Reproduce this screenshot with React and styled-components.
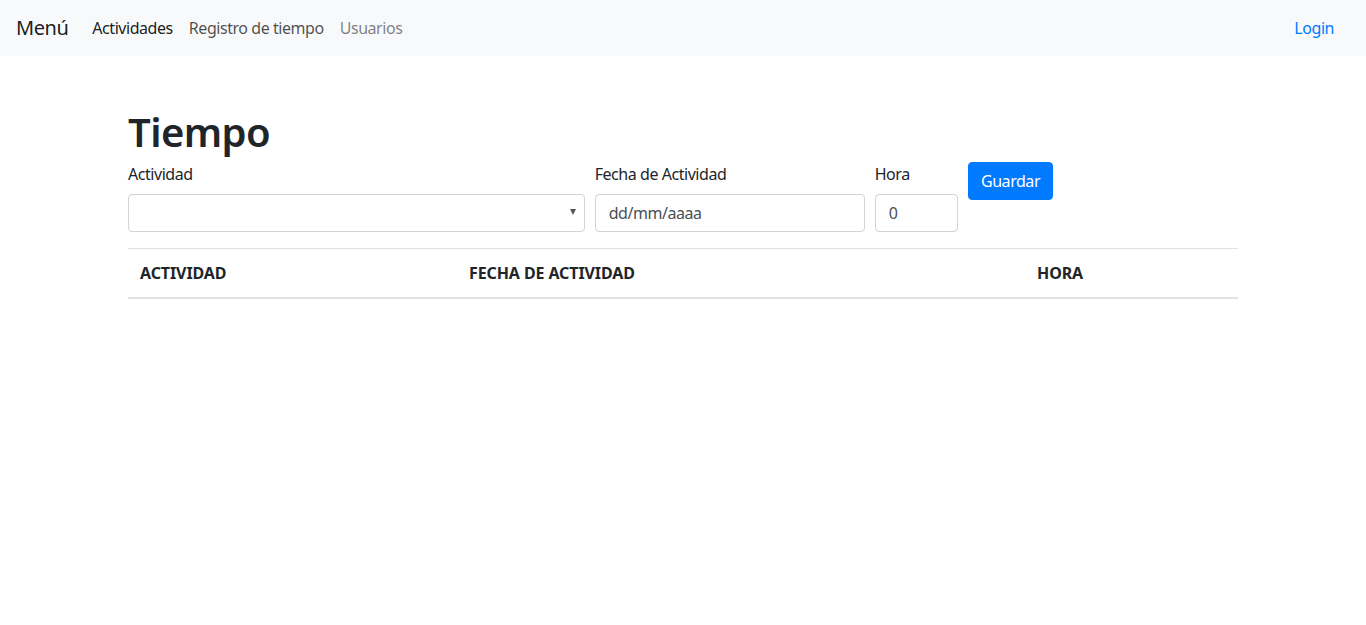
import React from 'react';
import styled, { createGlobalStyle } from 'styled-components';

const GlobalStyle = createGlobalStyle`
  * { box-sizing: border-box; }
  body {
    margin: 0;
    font-family: "Segoe UI", "Noto Sans", "Open Sans", sans-serif;
    font-size: 16px;
    line-height: 1.5;
    letter-spacing: -0.45px;
    color: #212529;
    background: #fff;
  }
`;

const Navbar = styled.nav`
  display: flex;
  align-items: center;
  height: 56px;
  padding: 0 16px;
  background-color: #f8f9fa;
`;

const Brand = styled.a`
  font-size: 20px;
  line-height: 1.5;
  color: rgba(0, 0, 0, 0.9);
  margin-right: 16px;
  text-decoration: none;
`;

const NavList = styled.ul`
  display: flex;
  list-style: none;
  margin: 0;
  padding: 0;
  flex: 1;
`;

const NavLink = styled.a`
  display: block;
  padding: 8px;
  text-decoration: none;
  color: ${(p) => p.$tone};
`;

const LoginLink = styled.a`
  color: #007bff;
  text-decoration: none;
  padding: 8px 0;
  margin-right: 16px;
`;

const Container = styled.main`
  width: 1140px;
  margin: 0 auto;
  padding: 0 15px;
`;

const Title = styled.h1`
  font-size: 40px;
  font-weight: 600;
  line-height: 1.2;
  letter-spacing: -0.6px;
  margin: 52px 0 6px;
`;

const FormRow = styled.form`
  display: grid;
  grid-template-columns: 41.6667% 25% 8.3333% 8.3333%;
  margin: 0 -5px;
`;

const Col = styled.div`
  padding: 0 5px;
  margin-bottom: 16px;
`;

const Label = styled.label`
  display: block;
  margin-bottom: 8px;
`;

const fieldBase = `
  display: block;
  width: 100%;
  height: 38px;
  padding: 6px 12px;
  font-family: inherit;
  font-size: 16px;
  line-height: 1.5;
  color: #495057;
  background: #fff;
  border: 1px solid #ced4da;
  border-radius: 4px;
`;

const SelectBox = styled.div`
  ${fieldBase}
  position: relative;
`;

const Caret = styled.span`
  position: absolute;
  right: 8px;
  top: 14px;
  width: 0;
  height: 0;
  border-left: 3.5px solid transparent;
  border-right: 3.5px solid transparent;
  border-top: 6px solid #555;
`;

const Input = styled.div`
  ${fieldBase}
  padding-left: 13px;
`;

const Button = styled.button`
  height: 38px;
  padding: 6px 12px;
  font-family: inherit;
  font-size: 16px;
  line-height: 1.5;
  letter-spacing: -0.45px;
  color: #fff;
  background-color: #007bff;
  border: 1px solid #007bff;
  border-radius: 4px;
`;

const Table = styled.table`
  width: 100%;
  border-collapse: collapse;
`;

const Th = styled.th`
  width: ${(p) => p.$w};
  text-align: left;
  padding: 12px;
  font-weight: 700;
  letter-spacing: -0.1px;
  border-top: 1px solid #dee2e6;
  border-bottom: 2px solid #dee2e6;
`;

export default function App() {
  return (
    <>
      <GlobalStyle />
      <Navbar>
        <Brand href="#">Menú</Brand>
        <NavList>
          <li><NavLink href="#" $tone="rgba(0,0,0,0.9)">Actividades</NavLink></li>
          <li><NavLink href="#" $tone="rgba(0,0,0,0.7)">Registro de tiempo</NavLink></li>
          <li><NavLink href="#" $tone="rgba(0,0,0,0.5)">Usuarios</NavLink></li>
        </NavList>
        <LoginLink href="#">Login</LoginLink>
      </Navbar>
      <Container>
        <Title>Tiempo</Title>
        <FormRow>
          <Col>
            <Label>Actividad</Label>
            <SelectBox><Caret /></SelectBox>
          </Col>
          <Col>
            <Label>Fecha de Actividad</Label>
            <Input>dd/mm/aaaa</Input>
          </Col>
          <Col>
            <Label>Hora</Label>
            <Input>0</Input>
          </Col>
          <Col>
            <Button type="button">Guardar</Button>
          </Col>
        </FormRow>
        <Table>
          <thead>
            <tr>
              <Th $w="329px">ACTIVIDAD</Th>
              <Th $w="568px">FECHA DE ACTIVIDAD</Th>
              <Th $w="213px">HORA</Th>
            </tr>
          </thead>
        </Table>
      </Container>
    </>
  );
}
